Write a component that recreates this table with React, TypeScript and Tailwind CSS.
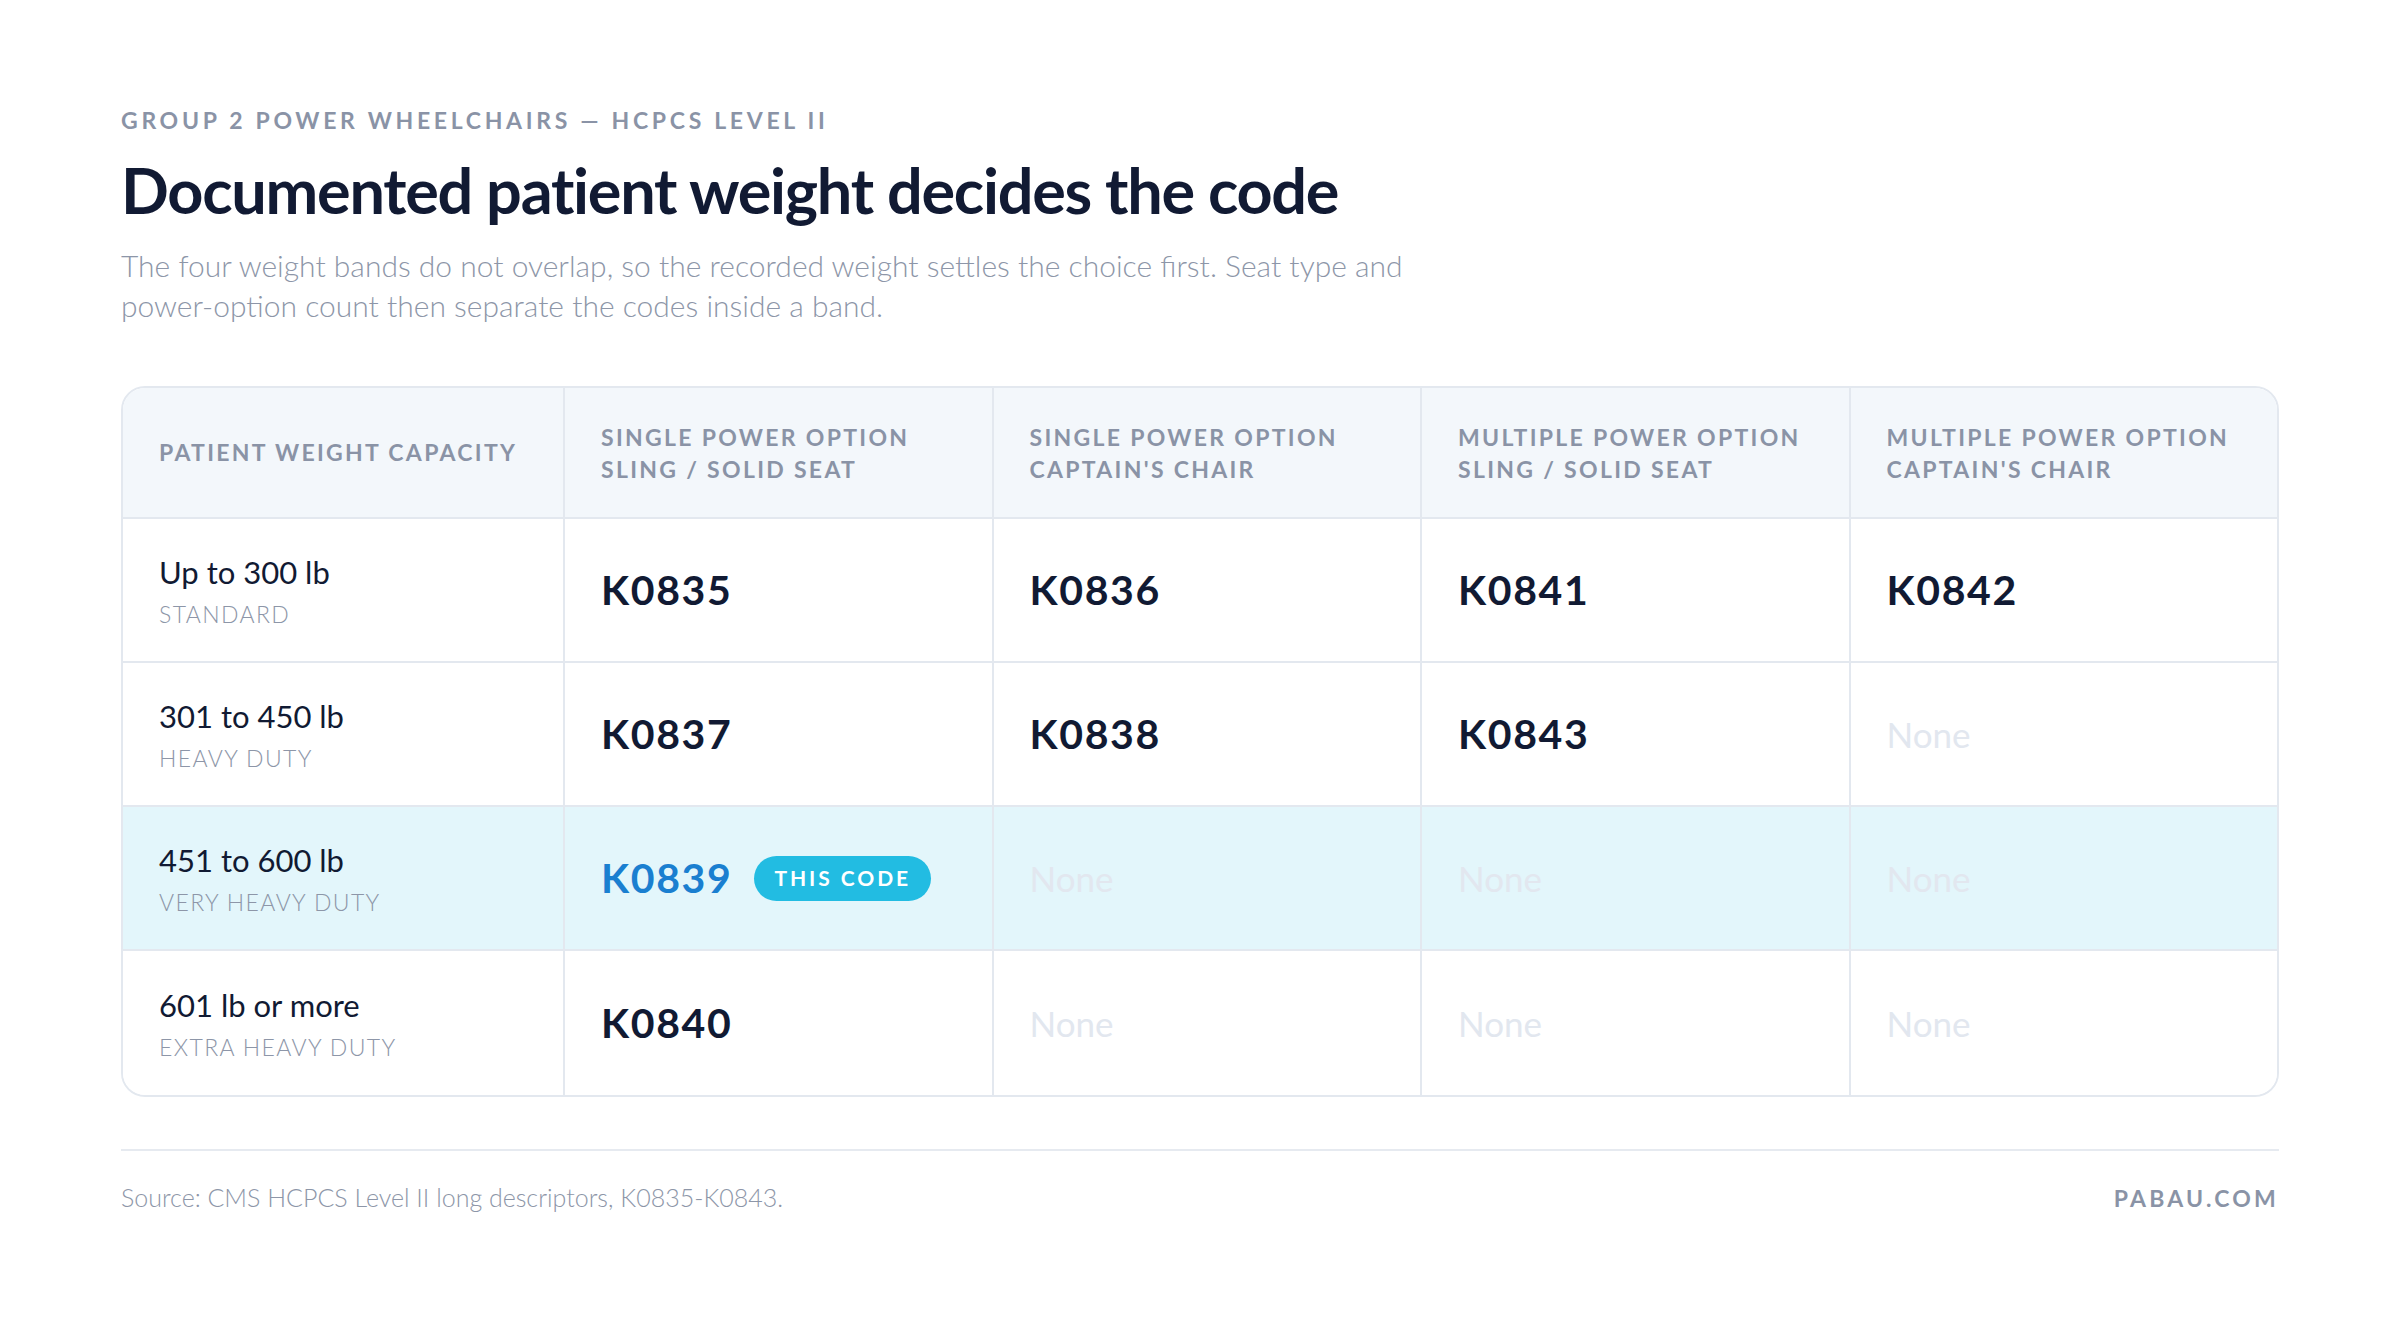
import React from "react";

type Row = {
  label: string;
  band: string;
  codes: (string | null)[];
  active?: boolean;
};

const rows: Row[] = [
  { label: "Up to 300 lb", band: "STANDARD", codes: ["K0835", "K0836", "K0841", "K0842"] },
  { label: "301 to 450 lb", band: "HEAVY DUTY", codes: ["K0837", "K0838", "K0843", null] },
  { label: "451 to 600 lb", band: "VERY HEAVY DUTY", codes: ["K0839", null, null, null], active: true },
  { label: "601 lb or more", band: "EXTRA HEAVY DUTY", codes: ["K0840", null, null, null] },
];

const headers = [
  ["SINGLE POWER OPTION", "SLING / SOLID SEAT"],
  ["SINGLE POWER OPTION", "CAPTAIN'S CHAIR"],
  ["MULTIPLE POWER OPTION", "SLING / SOLID SEAT"],
  ["MULTIPLE POWER OPTION", "CAPTAIN'S CHAIR"],
];

export default function App() {
  return (
    <div className="min-h-screen w-full bg-white px-[121px] pt-[106px] font-['Lato','Liberation_Sans',sans-serif]">
      <div className="text-[23px] font-bold tracking-[0.16em] text-[#8a93a6] leading-[28px]">
        GROUP 2 POWER WHEELCHAIRS — HCPCS LEVEL II
      </div>
      <h1 className="mt-[20px] text-[63px] font-bold tracking-[-0.02em] text-[#111a33] leading-[72px]">
        Documented patient weight decides the code
      </h1>
      <p className="mt-[19px] max-w-[1330px] text-[30px] font-light text-[#8d96a8] leading-[40px]">
        The four weight bands do not overlap, so the recorded weight settles the choice first. Seat type and
        power-option count then separate the codes inside a band.
      </p>

      <div className="mt-[61px] overflow-hidden rounded-[24px] border-2 border-[#e3e8ef]">
        <div className="grid grid-cols-[440px_repeat(4,1fr)] bg-[#f3f7fb] h-[131px] border-b-2 border-[#e3e8ef]">
          <div className="flex items-center px-9 text-[23px] font-bold tracking-[0.1em] text-[#8a93a6]">
            PATIENT WEIGHT CAPACITY
          </div>
          {headers.map((h, i) => (
            <div key={i} className="flex flex-col justify-center border-l-2 border-[#e3e8ef] px-9 text-[23px] font-bold tracking-[0.1em] text-[#8a93a6] leading-[32px]">
              <span>{h[0]}</span>
              <span>{h[1]}</span>
            </div>
          ))}
        </div>
        {rows.map((r, ri) => (
          <div
            key={ri}
            className={`grid grid-cols-[440px_repeat(4,1fr)] h-[144px] ${ri < rows.length - 1 ? "border-b-2 border-[#e3e8ef]" : ""} ${r.active ? "bg-[#e3f6fb]" : "bg-white"}`}
          >
            <div className="flex flex-col justify-center px-9">
              <span className="text-[31px] text-[#111a33] leading-[40px]">{r.label}</span>
              <span className="mt-[8px] text-[23px] font-light tracking-[0.06em] text-[#8d96a8] leading-[28px]">{r.band}</span>
            </div>
            {r.codes.map((c, ci) => (
              <div key={ci} className="flex items-center border-l-2 border-[#e3e8ef] px-9">
                {c ? (
                  <div className="flex items-center gap-[22px]">
                    <span className={`text-[41px] font-bold tracking-[0.04em] ${r.active ? "text-[#1a7fd0]" : "text-[#111a33]"}`}>{c}</span>
                    {r.active && (
                      <span className="flex h-[45px] items-center rounded-full bg-[#22bce2] px-[20px] text-[21px] font-bold tracking-[0.14em] text-white">
                        THIS CODE
                      </span>
                    )}
                  </div>
                ) : (
                  <span className="text-[35px] text-[#e2e7ef]">None</span>
                )}
              </div>
            ))}
          </div>
        ))}
      </div>

      <div className="mt-[52px] border-t-2 border-[#e6eaf0] pt-[28px] flex items-center justify-between">
        <span className="text-[25px] font-light text-[#8d96a8]">Source: CMS HCPCS Level II long descriptors, K0835-K0843.</span>
        <span className="text-[23px] font-bold tracking-[0.14em] text-[#8a93a6]">PABAU.COM</span>
      </div>
    </div>
  );
}
